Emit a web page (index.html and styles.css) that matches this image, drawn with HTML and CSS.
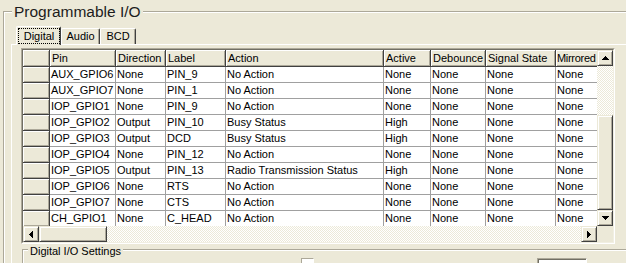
FILE: index.html
```html
<!DOCTYPE html>
<html>
<head>
<meta charset="utf-8">
<title>Programmable I/O</title>
<link rel="stylesheet" href="styles.css">
</head>
<body>
<div class="outer">
  <div class="group-title">Programmable I/O</div>
  <div class="tabs">
    <div class="tab active tab-digital"><span class="focus">Digital</span></div>
    <div class="tab tab-audio">Audio</div>
    <div class="tab tab-bcd">BCD</div>
  </div>
  <div class="panel">
    <div class="grid">
      <div class="grid-inner">
        <div class="grid-main">
          <div class="cells">
            <div class="c h"></div><div class="c h">Pin</div><div class="c h">Direction</div><div class="c h">Label</div><div class="c h">Action</div><div class="c h">Active</div><div class="c h">Debounce</div><div class="c h">Signal State</div><div class="c h tight">Mirrored</div>

            <div class="c h"></div><div class="c">AUX_GPIO6</div><div class="c">None</div><div class="c">PIN_9</div><div class="c">No Action</div><div class="c">None</div><div class="c">None</div><div class="c">None</div><div class="c">None</div>
            <div class="c h"></div><div class="c">AUX_GPIO7</div><div class="c">None</div><div class="c">PIN_1</div><div class="c">No Action</div><div class="c">None</div><div class="c">None</div><div class="c">None</div><div class="c">None</div>
            <div class="c h"></div><div class="c">IOP_GPIO1</div><div class="c">None</div><div class="c">PIN_9</div><div class="c">No Action</div><div class="c">None</div><div class="c">None</div><div class="c">None</div><div class="c">None</div>
            <div class="c h"></div><div class="c">IOP_GPIO2</div><div class="c">Output</div><div class="c">PIN_10</div><div class="c">Busy Status</div><div class="c">High</div><div class="c">None</div><div class="c">None</div><div class="c">None</div>
            <div class="c h"></div><div class="c">IOP_GPIO3</div><div class="c">Output</div><div class="c">DCD</div><div class="c">Busy Status</div><div class="c">High</div><div class="c">None</div><div class="c">None</div><div class="c">None</div>
            <div class="c h"></div><div class="c">IOP_GPIO4</div><div class="c">None</div><div class="c">PIN_12</div><div class="c">No Action</div><div class="c">None</div><div class="c">None</div><div class="c">None</div><div class="c">None</div>
            <div class="c h"></div><div class="c">IOP_GPIO5</div><div class="c">Output</div><div class="c">PIN_13</div><div class="c">Radio Transmission Status</div><div class="c">High</div><div class="c">None</div><div class="c">None</div><div class="c">None</div>
            <div class="c h"></div><div class="c">IOP_GPIO6</div><div class="c">None</div><div class="c">RTS</div><div class="c">No Action</div><div class="c">None</div><div class="c">None</div><div class="c">None</div><div class="c">None</div>
            <div class="c h"></div><div class="c">IOP_GPIO7</div><div class="c">None</div><div class="c">CTS</div><div class="c">No Action</div><div class="c">None</div><div class="c">None</div><div class="c">None</div><div class="c">None</div>
            <div class="c h"></div><div class="c">CH_GPIO1</div><div class="c">None</div><div class="c">C_HEAD</div><div class="c">No Action</div><div class="c">None</div><div class="c">None</div><div class="c">None</div><div class="c">None</div>
          </div>
          <div class="vscroll">
            <div class="sb"><svg width="7" height="4" viewBox="0 0 7 4"><path d="M3 0h1v1h1v1h1v1h1v1H0V3h1V2h1V1h1z"/></svg></div>
            <div class="track vtrack"></div>
            <div class="thumb vthumb"></div>
            <div class="sb"><svg width="7" height="4" viewBox="0 0 7 4"><path d="M0 0h7v1H6v1H5v1H4v1H3V3H2V2H1V1H0z"/></svg></div>
          </div>
        </div>
        <div class="grid-bottom">
          <div class="hscroll">
            <div class="sb"><svg width="4" height="7" viewBox="0 0 4 7"><path d="M3 0h1v7H3V6H2V5H1V4H0V3h1V2h1V1h1z"/></svg></div>
            <div class="thumb hthumb"></div>
            <div class="track htrack"></div>
            <div class="sb"><svg width="4" height="7" viewBox="0 0 4 7"><path d="M0 0h1v1h1v1h1v1h1v1H3v1H2v1H1v1H0z"/></svg></div>
          </div>
          <div class="corner"></div>
        </div>
      </div>
    </div>
    <div class="subgroup">
      <div class="subgroup-title">Digital I/O Settings</div>
      <div class="settings">
        <div class="chk"></div>
        <div class="num"></div>
      </div>
    </div>
  </div>
</div>
</body>
</html>
```

FILE: styles.css
```css
* { box-sizing: border-box; }

html, body {
  margin: 0;
}

body {
  width: 626px;
  height: 263px;
  overflow: hidden;
  padding: 11px 0 0 3px;
  background: #ece9d8;
  font-family: "Liberation Sans", Arial, sans-serif;
  font-size: 11px;
  color: #000;
}

.outer {
  width: 623px;
  height: 252px;
  border-top: 1px solid #aca899;
  border-left: 1px solid #aca899;
  box-shadow: inset 1px 1px 0 #fff;
}

.group-title {
  width: fit-content;
  margin: -10px 0 0 8px;
  padding: 0 2px;
  background: #ece9d8;
  font-size: 15.5px;
  line-height: 19px;
  color: #1c1c1c;
}

/* tabs */
.tabs {
  display: flex;
  align-items: flex-end;
  height: 18px;
  margin: 5px 0 0 12px;
}

.tab {
  height: 16px;
  border-top: 1px solid #fff;
  border-left: 1px solid #fff;
  border-right: 1px solid #404040;
  border-top-left-radius: 2px;
  border-top-right-radius: 2px;
  box-shadow: inset -1px 0 0 #aca899;
  text-align: center;
  line-height: 15px;
  background: #ece9d8;
}

.tab.active {
  height: 19px;
  margin-bottom: -1px;
  padding-top: 1px;
  position: relative;
  z-index: 1;
}

.tab-digital { width: 45px; }
.tab-audio { width: 39px; }
.tab-bcd { width: 36px; }

.focus {
  display: block;
  margin: 0 0 0 1px;
  border: 1px dotted #000;
  line-height: 14px;
  height: 16px;
}

/* tab panel */
.panel {
  width: 615px;
  border-top: 1px solid #fff;
  border-left: 1px solid #fff;
  padding: 3px 0 0 9px;
  margin-left: 7px;
}

/* grid */
.grid {
  width: 594px;
  border: 1px solid;
  border-color: #aca899 #fff #fff #aca899;
}

.grid-inner {
  border: 1px solid;
  border-color: #716f64 #f1efe2 #f1efe2 #716f64;
}

.grid-main {
  display: flex;
  height: 176px;
}

.cells {
  width: 574px;
  flex-shrink: 0;
  overflow: hidden;
  display: grid;
  grid-template-columns: 27px 66px 50px 60px 158px 47px 55px 70px 60px;
  grid-template-rows: 17px;
  grid-auto-rows: 16px;
  align-content: start;
  background: #fff;
}

.c {
  border-right: 1px solid #a0a0a0;
  border-bottom: 1px solid #a0a0a0;
  padding-left: 1px;
  line-height: 15px;
  white-space: nowrap;
  overflow: hidden;
}

.c.h {
  background: #ece9d8;
  border-color: #404040;
  box-shadow: inset 1px 1px 0 #fff, inset -1px -1px 0 #aca899;
  padding-left: 2px;
  line-height: 16px;
}

.c.tight {
  padding-left: 1px;
  letter-spacing: -0.3px;
}

/* scrollbars */
.vscroll {
  width: 16px;
  display: flex;
  flex-direction: column;
}

.sb, .thumb {
  background: #ece9d8;
  border: 1px solid;
  border-color: #ece9d8 #404040 #404040 #ece9d8;
  box-shadow: inset 1px 1px 0 #fff, inset -1px -1px 0 #aca899;
  flex-shrink: 0;
}

.sb {
  width: 16px;
  height: 16px;
  display: flex;
  align-items: center;
  justify-content: center;
}

.sb svg {
  display: block;
  fill: #000;
}

.track {
  background-color: #fff;
  background-image: conic-gradient(#ece9d8 25%, #fff 0 50%, #ece9d8 0 75%, #fff 0);
  background-size: 2px 2px;
}

.vtrack { height: 49px; }
.vthumb { height: 95px; }

.grid-bottom {
  display: flex;
  height: 16px;
}

.hscroll {
  width: 574px;
  display: flex;
}

.hthumb { width: 68px; }
.htrack { flex: 1; }

.corner {
  width: 16px;
  background: #ece9d8;
}

/* settings group */
.subgroup {
  width: 604px;
  height: 14px;
  margin: 5px 0 0 1px;
  border-top: 1px solid #aca899;
  border-left: 1px solid #aca899;
  box-shadow: inset 1px 1px 0 #fff;
}

.subgroup-title {
  width: fit-content;
  margin: -5px 0 0 5px;
  padding: 0 2px;
  background: #ece9d8;
  line-height: 13px;
}

.settings {
  display: flex;
  align-items: flex-start;
  padding-left: 278px;
}

.chk {
  width: 13px;
  height: 5px;
  border: 1px solid;
  border-bottom: none;
  border-color: #aca899 #fff #fff #aca899;
  background: #fff;
}

.num {
  width: 50px;
  height: 5px;
  margin-left: 223px;
  border: 1px solid;
  border-bottom: none;
  border-color: #aca899 #fff #fff #aca899;
  box-shadow: inset 1px 1px 0 #716f64;
  background: #fff;
}
```
